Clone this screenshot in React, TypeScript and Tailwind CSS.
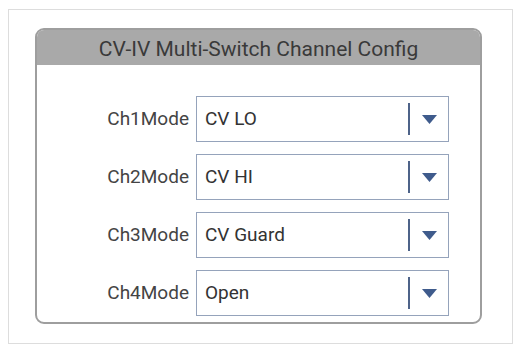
import React from 'react';

const channels = [
  { label: 'Ch1Mode', value: 'CV LO' },
  { label: 'Ch2Mode', value: 'CV HI' },
  { label: 'Ch3Mode', value: 'CV Guard' },
  { label: 'Ch4Mode', value: 'Open' },
];

function ModeSelect({ value }: { value: string }) {
  return (
    <div className="flex h-[46px] w-[253px] items-center border border-[#95a3bb] bg-white">
      <span className="flex-1 pl-[8px] text-[19px] text-[#333]">{value}</span>
      <div className="h-[32px] w-[2px] bg-[#4e6389]" />
      <div className="flex w-[38px] items-center justify-center">
        <svg width="15" height="9" viewBox="0 0 15 9">
          <path d="M0 0h15L7.5 9z" fill="#3f5b8c" />
        </svg>
      </div>
    </div>
  );
}

export default function App() {
  return (
    <div
      className="h-[351px] w-[523px] bg-white pl-[8px] pt-[9px]"
      style={{ fontFamily: 'Roboto, "Liberation Sans", sans-serif' }}
    >
      <div className="h-[335px] w-[505px] border border-[#dddddd] pl-[26px] pt-[18px]">
        <div className="w-[447px] overflow-hidden rounded-[9px] border-2 border-[#9e9e9e] bg-white">
          <div className="flex h-[35px] items-center justify-center bg-[#a9a9a9] pt-[5px] text-[21px] text-[#3a3a3a]">
            CV-IV Multi-Switch Channel Config
          </div>
          <div className="flex flex-col gap-[12px] pb-[6px] pt-[31px]">
            {channels.map((c) => (
              <div key={c.label} className="flex items-center">
                <div className="w-[159px] pr-[7px] text-right text-[19px] text-[#444]">{c.label}</div>
                <ModeSelect value={c.value} />
              </div>
            ))}
          </div>
        </div>
      </div>
    </div>
  );
}
